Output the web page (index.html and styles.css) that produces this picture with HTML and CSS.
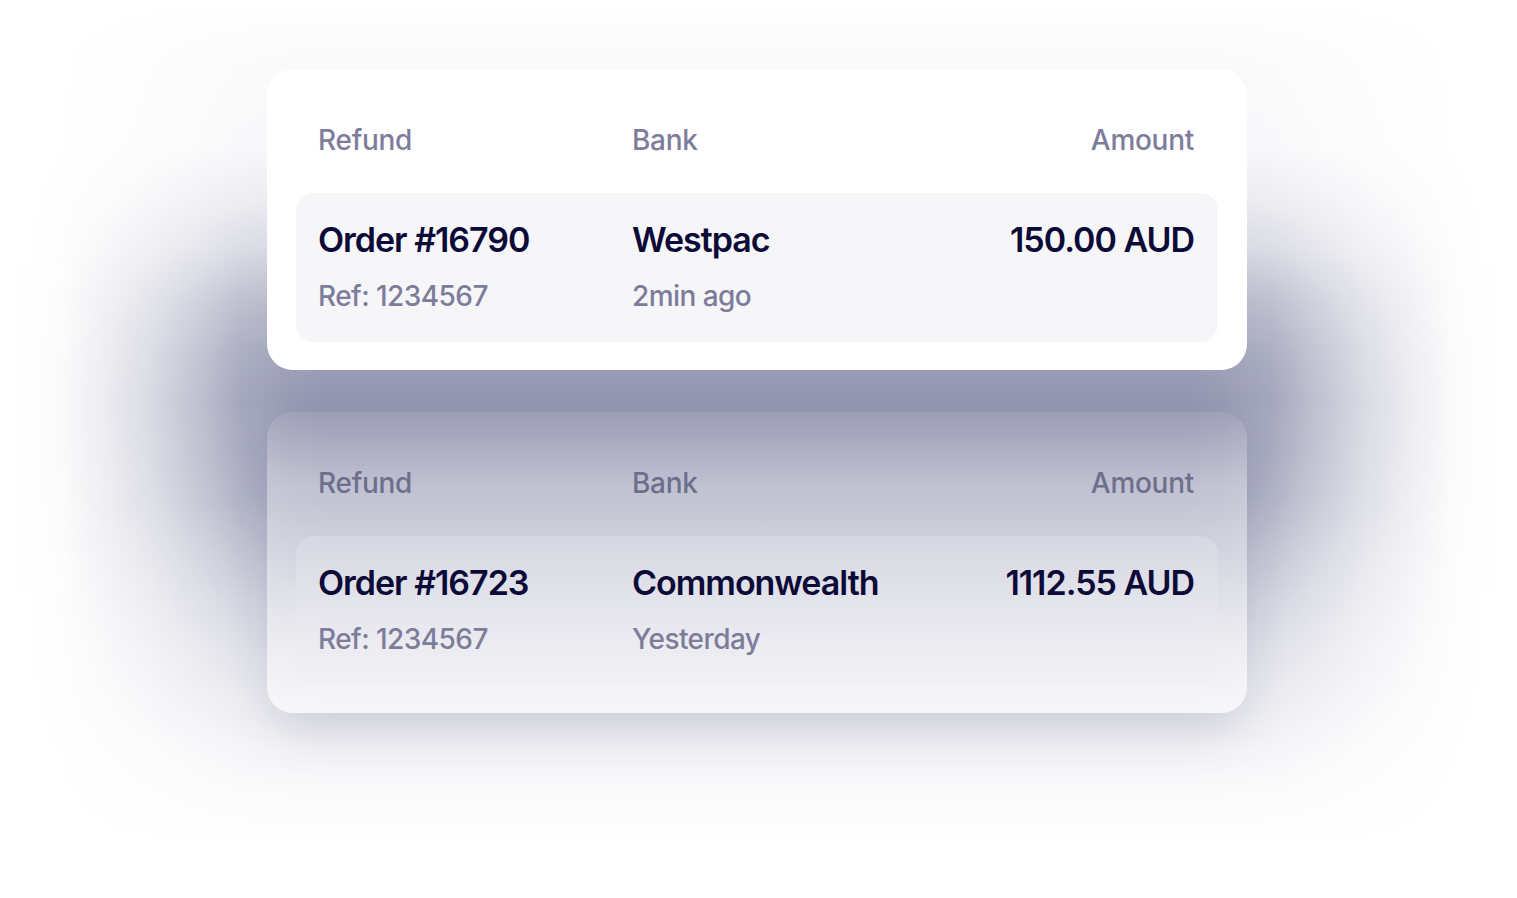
FILE: index.html
```html
<!DOCTYPE html>
<html lang="en">
<head>
<meta charset="utf-8">
<title>Refunds</title>
<link rel="stylesheet" href="styles.css">
</head>
<body>
<main class="stage">
  <section class="card card-front">
    <div class="grid head">
      <span>Refund</span>
      <span>Bank</span>
      <span class="right">Amount</span>
    </div>
    <div class="grid row">
      <div class="cell">
        <span class="title">Order #16790</span>
        <span class="sub">Ref: 1234567</span>
      </div>
      <div class="cell">
        <span class="title">Westpac</span>
        <span class="sub">2min ago</span>
      </div>
      <div class="cell right">
        <span class="title">150.00 AUD</span>
      </div>
    </div>
  </section>
  <section class="card card-back">
    <div class="grid head">
      <span>Refund</span>
      <span>Bank</span>
      <span class="right">Amount</span>
    </div>
    <div class="grid row">
      <div class="cell">
        <span class="title">Order #16723</span>
        <span class="sub">Ref: 1234567</span>
      </div>
      <div class="cell">
        <span class="title">Commonwealth</span>
        <span class="sub">Yesterday</span>
      </div>
      <div class="cell right">
        <span class="title">1112.55 AUD</span>
      </div>
    </div>
  </section>
</main>
</body>
</html>
```

FILE: styles.css
```css
* { box-sizing: border-box; }
html, body {
  margin: 0;
  padding: 0;
  background: #ffffff;
  width: 1517px;
  height: 898px;
  overflow: hidden;
  font-family: Inter, "Noto Sans", sans-serif;
}
.stage {
  position: relative;
  isolation: isolate;
  height: 898px;
  display: flex;
  flex-direction: column;
  align-items: center;
  gap: 42px;
  padding-top: 69px;
  padding-right: 3px;
}
/* soft group shadow glow behind the cards */
.stage::before {
  content: "";
  position: absolute;
  inset: 0;
  z-index: -1;
  background: linear-gradient(90deg,
    rgba(30, 35, 90, 0) 0px,
    rgba(30, 35, 90, 0.005) 30px,
    rgba(30, 35, 90, 0.02) 60px,
    rgba(30, 35, 90, 0.08) 100px,
    rgba(30, 35, 90, 0.17) 150px,
    rgba(30, 35, 90, 0.29) 200px,
    rgba(30, 35, 90, 0.40) 240px,
    rgba(30, 35, 90, 0.46) 290px,
    rgba(30, 35, 90, 0.48) 330px,
    rgba(30, 35, 90, 0.48) 1184px,
    rgba(30, 35, 90, 0.46) 1224px,
    rgba(30, 35, 90, 0.40) 1274px,
    rgba(30, 35, 90, 0.29) 1314px,
    rgba(30, 35, 90, 0.17) 1364px,
    rgba(30, 35, 90, 0.08) 1414px,
    rgba(30, 35, 90, 0.02) 1454px,
    rgba(30, 35, 90, 0.005) 1484px,
    rgba(30, 35, 90, 0) 1514px);
  -webkit-mask-image: linear-gradient(180deg,
    rgba(0,0,0,0) 0px,
    rgba(0,0,0,0.05) 60px,
    rgba(0,0,0,0.08) 150px,
    rgba(0,0,0,0.2) 200px,
    rgba(0,0,0,0.4) 250px,
    rgba(0,0,0,0.7) 300px,
    rgba(0,0,0,0.9) 350px,
    rgba(0,0,0,1) 400px,
    rgba(0,0,0,0.95) 450px,
    rgba(0,0,0,0.85) 500px,
    rgba(0,0,0,0.65) 550px,
    rgba(0,0,0,0.48) 600px,
    rgba(0,0,0,0.33) 650px,
    rgba(0,0,0,0.21) 700px,
    rgba(0,0,0,0.1) 750px,
    rgba(0,0,0,0.04) 800px,
    rgba(0,0,0,0) 850px);
  mask-image: linear-gradient(180deg,
    rgba(0,0,0,0) 0px,
    rgba(0,0,0,0.05) 60px,
    rgba(0,0,0,0.08) 150px,
    rgba(0,0,0,0.2) 200px,
    rgba(0,0,0,0.4) 250px,
    rgba(0,0,0,0.7) 300px,
    rgba(0,0,0,0.9) 350px,
    rgba(0,0,0,1) 400px,
    rgba(0,0,0,0.95) 450px,
    rgba(0,0,0,0.85) 500px,
    rgba(0,0,0,0.65) 550px,
    rgba(0,0,0,0.48) 600px,
    rgba(0,0,0,0.33) 650px,
    rgba(0,0,0,0.21) 700px,
    rgba(0,0,0,0.1) 750px,
    rgba(0,0,0,0.04) 800px,
    rgba(0,0,0,0) 850px);
}
.card {
  width: 980px;
  height: 301px;
  flex: none;
  border-radius: 26px;
  padding: 54px 29px 28px 29px;
  display: flex;
  flex-direction: column;
  gap: 36px;
}
.card-front {
  background: #ffffff;
}
.card-back {
  background: linear-gradient(180deg,
    rgba(255, 255, 255, 0.06) 0%,
    rgba(255, 255, 255, 0.34) 25%,
    rgba(255, 255, 255, 0.36) 55%,
    rgba(255, 255, 255, 0.58) 100%);
  box-shadow: 0 24px 48px -8px rgba(30, 35, 90, 0.16);
}
.grid {
  display: grid;
  grid-template-columns: 314px 1fr auto;
  padding: 0 24px 0 22px;
}
.head {
  font-size: 28px;
  line-height: 34px;
  font-weight: 500;
  color: #7d7d9b;
  letter-spacing: -0.01em;
}
.card-back .head { color: #6e6f8d; }
.right { text-align: right; }
.row {
  background: #f6f6f9;
  border-radius: 18px;
  padding-top: 27px;
  padding-bottom: 29px;
  height: 149px;
}
.card-back .row {
  background: rgba(236, 236, 242, 0.3);
}
.cell {
  display: flex;
  flex-direction: column;
  gap: 19px;
}
.cell.right { align-items: flex-end; }
.title {
  font-size: 34px;
  line-height: 40px;
  font-weight: 600;
  color: #0c0b38;
  letter-spacing: -0.03em;
}
.sub {
  font-size: 28px;
  line-height: 34px;
  font-weight: 500;
  color: #7d7d9b;
  letter-spacing: -0.02em;
}
```
